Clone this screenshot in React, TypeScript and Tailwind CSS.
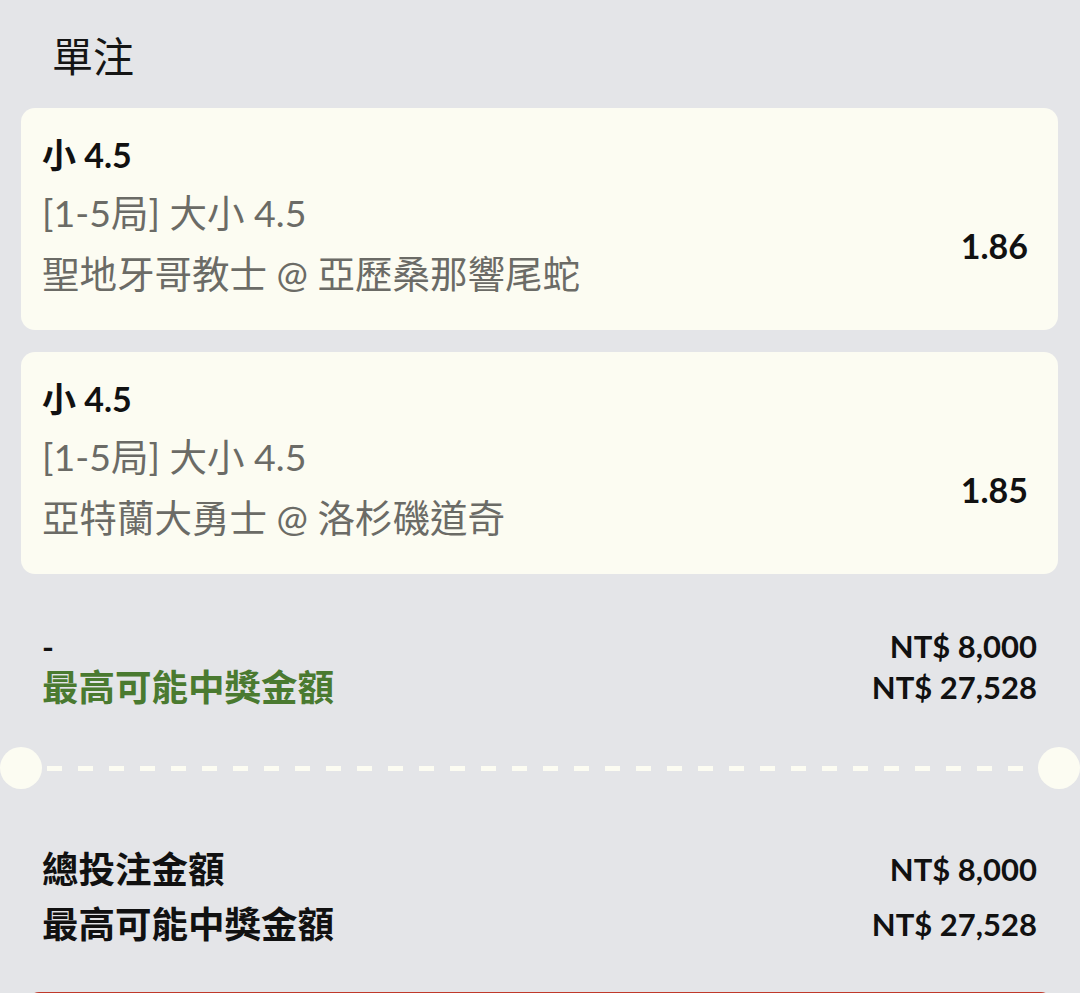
import React from "react";

const bets = [
  { pick: "小 4.5", market: "[1-5局] 大小 4.5", match: "聖地牙哥教士 @ 亞歷桑那響尾蛇", odds: "1.86" },
  { pick: "小 4.5", market: "[1-5局] 大小 4.5", match: "亞特蘭大勇士 @ 洛杉磯道奇", odds: "1.85" },
];

function BetCard({ pick, market, match, odds }: { pick: string; market: string; match: string; odds: string }) {
  return (
    <div className="mx-[21px] mr-[22px] rounded-[14px] bg-[#fcfcf2] pl-[21px] pr-[30px] pt-[20px] pb-[26px]">
      <div className="text-[34px] leading-[54px] font-bold text-[#111111]">{pick}</div>
      <div className="flex items-center justify-between">
        <div className="text-[37.5px] leading-[61px] text-[#6b6b66]">
          <div>{market}</div>
          <div>{match}</div>
        </div>
        <div className="pt-[6px] text-[34px] leading-[40px] font-bold text-[#111111]">{odds}</div>
      </div>
    </div>
  );
}

export default function App() {
  return (
    <div className="min-h-screen w-full overflow-hidden bg-[#e4e5e8] font-['Lato','Noto_Sans_CJK_TC',sans-serif]">
      <div className="pl-[52px] pt-[27px] pb-[21px] text-[41px] leading-[60px] text-[#151515]">單注</div>

      <div className="flex flex-col gap-[22px]">
        {bets.map((b, i) => (
          <BetCard key={i} {...b} />
        ))}
      </div>

      <div className="mt-[52px] px-[43px] pl-[42px]">
        <div className="flex items-center justify-between leading-[41px]">
          <span className="text-[32px] font-bold text-[#111111]">-</span>
          <span className="text-[31px] font-bold text-[#111111]">NT$ 8,000</span>
        </div>
        <div className="flex items-center justify-between leading-[41px]">
          <span className="text-[36.5px] font-bold text-[#4a7a30]">最高可能中獎金額</span>
          <span className="text-[31px] font-bold text-[#111111]">NT$ 27,528</span>
        </div>
      </div>

      <div className="mt-[39px] flex items-center">
        <div className="h-[42px] w-[42px] shrink-0 rounded-full bg-[#fcfcf2]" />
        <div className="mx-[5px] h-[5px] flex-1 bg-[repeating-linear-gradient(90deg,#fcfcf2_0px,#fcfcf2_15px,transparent_15px,transparent_31px)]" />
        <div className="h-[42px] w-[42px] shrink-0 rounded-full bg-[#fcfcf2]" />
      </div>

      <div className="mt-[53px] px-[43px] pl-[42px]">
        <div className="flex items-center justify-between leading-[55px]">
          <span className="text-[36.5px] font-bold text-[#111111]">總投注金額</span>
          <span className="text-[31px] font-bold text-[#111111]">NT$ 8,000</span>
        </div>
        <div className="flex items-center justify-between leading-[55px]">
          <span className="text-[36.5px] font-bold text-[#111111]">最高可能中獎金額</span>
          <span className="text-[31px] font-bold text-[#111111]">NT$ 27,528</span>
        </div>
      </div>

      <div className="mx-[27px] mt-[40px] h-[60px] rounded-[12px] bg-[#c0392b]" />
    </div>
  );
}
